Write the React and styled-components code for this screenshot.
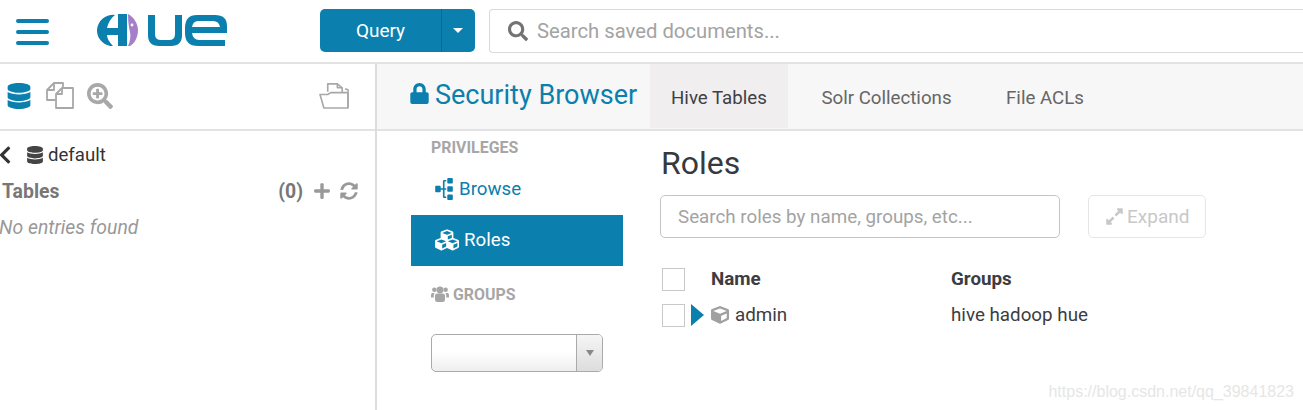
import React from 'react';
import styled, { createGlobalStyle } from 'styled-components';
import { FaDatabase, FaLock, FaChevronLeft, FaPlus, FaSyncAlt, FaSitemap, FaCubes, FaCube, FaExpandAlt, FaSearch, FaSearchPlus } from 'react-icons/fa';

const Global = createGlobalStyle`
  html, body { margin: 0; padding: 0; background: #fff; height: 100%; overflow: hidden; }
  body { font-family: Roboto, "Liberation Sans", sans-serif; color: #333; }
  * { box-sizing: border-box; }
`;
const Page = styled.div`position: relative; width: 1303px; height: 410px; overflow: hidden; background: #fff;`;
const TopBar = styled.header`display: flex; align-items: flex-start; height: 64px; border-bottom: 2px solid #e2e2e2;`;
const Burger = styled.div`display: flex; flex-direction: column; gap: 7px; width: 33px; margin: 19px 0 0 16px;`;
const BurgerLine = styled.span`display: block; height: 4px; border-radius: 2px; background: #0b7fad;`;
const LogoWrap = styled.div`width: 132px; height: 32px; margin: 14px 0 0 48px; flex: none;`;
const QueryGroup = styled.div`display: flex; width: 155px; height: 43px; margin: 9px 14px 0 91px; flex: none; border-radius: 5px; background: #0b7fad; color: #fff; overflow: hidden;`;
const QueryLabel = styled.div`flex: 1; display: flex; align-items: center; justify-content: center; font-size: 19px; padding-bottom: 1px;`;
const QueryCaret = styled.div`width: 34px; padding-right: 2px; border-left: 1px solid #0a6a92; display: flex; align-items: center; justify-content: center;
  &::after { content: ''; border-left: 5px solid transparent; border-right: 5px solid transparent; border-top: 5px solid #fff; }`;
const GlobalSearch = styled.div`flex: 1; display: flex; align-items: center; gap: 9px; height: 44px; margin-top: 9px; padding-left: 18px; border: 1px solid #d9d9d9; border-right: none; border-radius: 4px 0 0 4px; color: #a3a3a3; font-size: 20.25px;
  & svg { color: #737373; font-size: 20px; flex: none; }`;

const Body = styled.div`display: flex; height: 346px;`;
const Sidebar = styled.aside`width: 375px; flex: none;`;
const Divider = styled.div`width: 2px; flex: none; background: #dcdcdc;`;
const SideTools = styled.div`display: flex; align-items: center; height: 67px; border-bottom: 2px solid #e2e2e2; padding: 0 26px 2px 6px;`;
const ToolIcon = styled.span`display: flex; color: ${p => p.$on ? '#0b7fad' : '#a8a8a8'}; font-size: ${p => p.$size || 26}px; margin-right: ${p => p.$gap || 0}px; ${p => p.$push ? 'margin-left: auto;' : ''}`;
const DbRow = styled.div`display: flex; align-items: center; height: 20px; margin-top: 14px; font-size: 18.6px; color: #333;
  & > svg:first-child { font-size: 20px; margin: 0 11px 0 -5px; flex: none; }
  & > svg:nth-child(2) { font-size: 18px; color: #444; margin-right: 4px; flex: none; }`;
const TablesRow = styled.div`display: flex; align-items: center; height: 24px; margin-top: 14px; padding: 0 17px 0 2px; font-size: 19.4px; font-weight: 700; color: #777;`;
const Count = styled.span`margin-left: auto; margin-right: 10px;`;
const TablesIcon = styled.span`display: flex; color: #999; font-size: 18px; margin-left: ${p => p.$gap || 0}px;`;
const Empty = styled.div`margin-top: 13px; font-size: 19.4px; font-style: italic; color: #999; margin-left: -1px;`;

const Main = styled.main`flex: 1; min-width: 0;`;
const AppHeader = styled.div`display: flex; height: 67px; background: #f7f7f7; border-bottom: 2px solid #e2e2e2; padding-left: 34px;`;
const AppTitle = styled.h1`margin: 0; display: flex; align-items: center; gap: 5px; height: 62px; width: 239px; flex: none; color: #0b7fad; font-size: 27px; font-weight: 400; white-space: nowrap;
  & svg { font-size: 21px; margin: -4px 0 0 -2px; }`;
const Tabs = styled.nav`display: flex; height: 64px;`;
const Tab = styled.div`display: flex; align-items: center; padding: 3px 21px 0; margin-right: 12.5px; font-size: 18.7px; color: ${p => p.$active ? '#3f3f46' : '#666'}; background: ${p => p.$active ? '#f0eeee' : 'transparent'}; white-space: nowrap;`;

const Content = styled.div`display: flex; padding-left: 34px;`;
const Nav = styled.div`width: 212px; flex: none; margin-right: 37px;`;
const NavHeader = styled.div`display: flex; align-items: center; gap: 4px; padding-left: 20px; font-size: 15.9px; font-weight: 700; color: #a6a6a6; height: 30px; margin-top: ${p => p.$mt || 0}px;`;
const NavItem = styled.div`display: flex; align-items: center; gap: ${p => p.$gap}px; height: 51px; padding: 0 0 ${p => p.$active ? 2 : 1}px 24px; font-size: 18.7px; color: ${p => p.$active ? '#fff' : '#0b7fad'}; background: ${p => p.$active ? '#0b7fad' : 'transparent'}; margin-top: ${p => p.$mt || 0}px;
  & svg { font-size: ${p => p.$icon}px; }`;
const BranchIcon = styled(FaSitemap)`transform: rotate(-90deg); margin-left: -2px;`;
const SelectBox = styled.div`display: flex; width: 172px; height: 38px; margin: 25px 0 0 20px; border: 1px solid #aaa; border-radius: 5px; overflow: hidden; background: linear-gradient(#fff 45%, #eee);`;
const SelectArrow = styled.div`margin-left: auto; width: 26px; border-left: 1px solid #aaa; background: linear-gradient(#f5f5f5, #ddd); display: flex; align-items: center; justify-content: center;
  &::after { content: ''; border-left: 4px solid transparent; border-right: 4px solid transparent; border-top: 6px solid #888; }`;

const Detail = styled.div`flex: 1; min-width: 0;`;
const Heading = styled.h2`margin: 12px 0 0 1px; font-size: 32px; font-weight: 400; color: #38383d; line-height: 40px;`;
const Controls = styled.div`display: flex; margin-top: 12px;`;
const RoleSearch = styled.div`display: flex; align-items: center; width: 400px; height: 43px; padding-left: 17px; border: 1px solid #c4c4c4; border-radius: 5px; font-size: 18.8px; color: #a3a3a3;`;
const ExpandBtn = styled.div`display: flex; align-items: center; gap: 3px; margin-left: 28px; width: 118px; height: 43px; padding-left: 16px; border: 1px solid #e6e6e6; border-radius: 5px; font-size: 19px; color: #c8c8c8;
  & svg { font-size: 19px; }`;
const Table = styled.div`display: grid; grid-template-columns: 51px 240px 1fr; margin-top: 23px;`;
const Cell = styled.div`display: flex; align-items: center; height: 36px; font-size: 18.8px; font-weight: ${p => p.$head ? 700 : 400}; color: #3c3c42; position: relative;`;
const Check = styled.span`display: block; width: 23px; height: 23px; margin-left: 2px; border: 1px solid #c9c9c9;`;
const Arrow = styled.span`position: absolute; left: -20px; top: 7px; border-left: 13px solid #0b7fad; border-top: 11px solid transparent; border-bottom: 11px solid transparent;`;
const CubeIcon = styled.span`display: flex; color: #a0a0a0; font-size: 18px; margin-right: 6px;`;
const Watermark = styled.div`position: absolute; right: 9px; top: 383px; font-family: "Liberation Sans", sans-serif; font-size: 16px; color: #e6e6e6; white-space: nowrap;`;

const Logo = () => (
  <svg width="132" height="32" viewBox="0 0 132 32">
    <path d="M18 1 A16 16 0 0 0 0 16 A16 16 0 0 0 13 32 L16 32 C12 28 10 24 10 21 L21 21 L21 32 L30 32 L30 0 L21 0 L21 14 L10 14 C11 9 14 4 18 1 Z" fill="#0b7fad" />
    <path d="M31 0 C37 3 41 10 41 16 C41 24 37 30 33 32 L31 32 C33 28 34 22 33 18 C32 14 31 8 31 0 Z" fill="#a67fc8" />
    <circle cx="35" cy="11" r="1.4" fill="#fff" />
    <path d="M51 1 L58 1 L58 20 Q58 26 64 26 L72 26 Q78 26 78 20 L78 1 L85 1 L85 21 Q85 32 74 32 L62 32 Q51 32 51 21 Z" fill="#0b7fad" />
    <path fillRule="evenodd" d="M100 1 L118 1 Q130 1 130 12 L130 19 L95 19 Q96 26 102 26 L128 26 L128 32 L101 32 Q88 32 88 19 L88 14 Q88 1 100 1 Z M95 13 L123 13 Q122 7 116 7 L101 7 Q96 7 95 13 Z" fill="#0b7fad" />
  </svg>
);

const CopyDocs = () => (
  <svg width="28" height="27" viewBox="0 0 28 27" fill="none" stroke="#a8a8a8" strokeWidth="1.8" strokeLinejoin="round">
    <path d="M9 18 H1 V8 L8 1 H17 V5" />
    <path d="M8 1 V8 H1" />
    <path d="M10 26 V12 L16 6 H27 V26 Z" />
    <path d="M16 6 V12 H10" />
  </svg>
);

const FolderDocs = () => (
  <svg width="30" height="27" viewBox="0 0 31 28" fill="none" stroke="#a8a8a8" strokeWidth="1.7" strokeLinejoin="round">
    <path d="M9 10 V2 H19 L24 6 V11" />
    <path d="M19 2 V6 H24" />
    <path d="M27 7 L30 8 V27 H5 L1 13 H9 L12 11 H29" />
    <path d="M30 27 V11" />
  </svg>
);

const UsersGlyph = () => (
  <svg width="18" height="16" viewBox="0 0 18 16" fill="#a6a6a6">
    <circle cx="9" cy="4" r="3.4" />
    <circle cx="3.4" cy="3.8" r="2.3" />
    <circle cx="14.6" cy="3.8" r="2.3" />
    <path d="M4 9.5 Q4 7.5 6.5 7.5 H11.5 Q14 7.5 14 9.5 V14 Q14 16 11.5 16 H6.5 Q4 16 4 14 Z" />
    <path d="M3 7 H1.5 Q0 7 0 9 V11.5 H2.8 V9 Q2.8 7.8 3.8 7 Z" />
    <path d="M15 7 H16.5 Q18 7 18 9 V11.5 H15.2 V9 Q15.2 7.8 14.2 7 Z" />
  </svg>
);

export default function App() {
  return (
    <Page>
      <Global />
      <TopBar>
        <Burger><BurgerLine /><BurgerLine /><BurgerLine /></Burger>
        <LogoWrap><Logo /></LogoWrap>
        <QueryGroup><QueryLabel>Query</QueryLabel><QueryCaret /></QueryGroup>
        <GlobalSearch><FaSearch />Search saved documents...</GlobalSearch>
      </TopBar>
      <Body>
        <Sidebar>
          <SideTools>
            <ToolIcon $on $gap={14}><FaDatabase /></ToolIcon>
            <ToolIcon $gap={13}><CopyDocs /></ToolIcon>
            <ToolIcon><FaSearchPlus /></ToolIcon>
            <ToolIcon $push><FolderDocs /></ToolIcon>
          </SideTools>
          <DbRow><FaChevronLeft /><FaDatabase />default</DbRow>
          <TablesRow>Tables<Count>(0)</Count><TablesIcon><FaPlus /></TablesIcon><TablesIcon $gap={9}><FaSyncAlt /></TablesIcon></TablesRow>
          <Empty>No entries found</Empty>
        </Sidebar>
        <Divider />
        <Main>
          <AppHeader>
            <AppTitle><FaLock />Security Browser</AppTitle>
            <Tabs>
              <Tab $active>Hive Tables</Tab>
              <Tab>Solr Collections</Tab>
              <Tab>File ACLs</Tab>
            </Tabs>
          </AppHeader>
          <Content>
            <Nav>
              <NavHeader $mt={1}>PRIVILEGES</NavHeader>
              <NavItem $gap={4} $icon={22} $mt={2}><BranchIcon />Browse</NavItem>
              <NavItem $active $gap={5} $icon={24}><FaCubes />Roles</NavItem>
              <NavHeader $mt={13}><UsersGlyph />GROUPS</NavHeader>
              <SelectBox><SelectArrow /></SelectBox>
            </Nav>
            <Detail>
              <Heading>Roles</Heading>
              <Controls>
                <RoleSearch>Search roles by name, groups, etc...</RoleSearch>
                <ExpandBtn><FaExpandAlt />Expand</ExpandBtn>
              </Controls>
              <Table>
                <Cell $head><Check /></Cell>
                <Cell $head>Name</Cell>
                <Cell $head>Groups</Cell>
                <Cell><Check /></Cell>
                <Cell><Arrow /><CubeIcon><FaCube /></CubeIcon>admin</Cell>
                <Cell>hive hadoop hue</Cell>
              </Table>
            </Detail>
          </Content>
        </Main>
      </Body>
      <Watermark>https://blog.csdn.net/qq_39841823</Watermark>
    </Page>
  );
}
